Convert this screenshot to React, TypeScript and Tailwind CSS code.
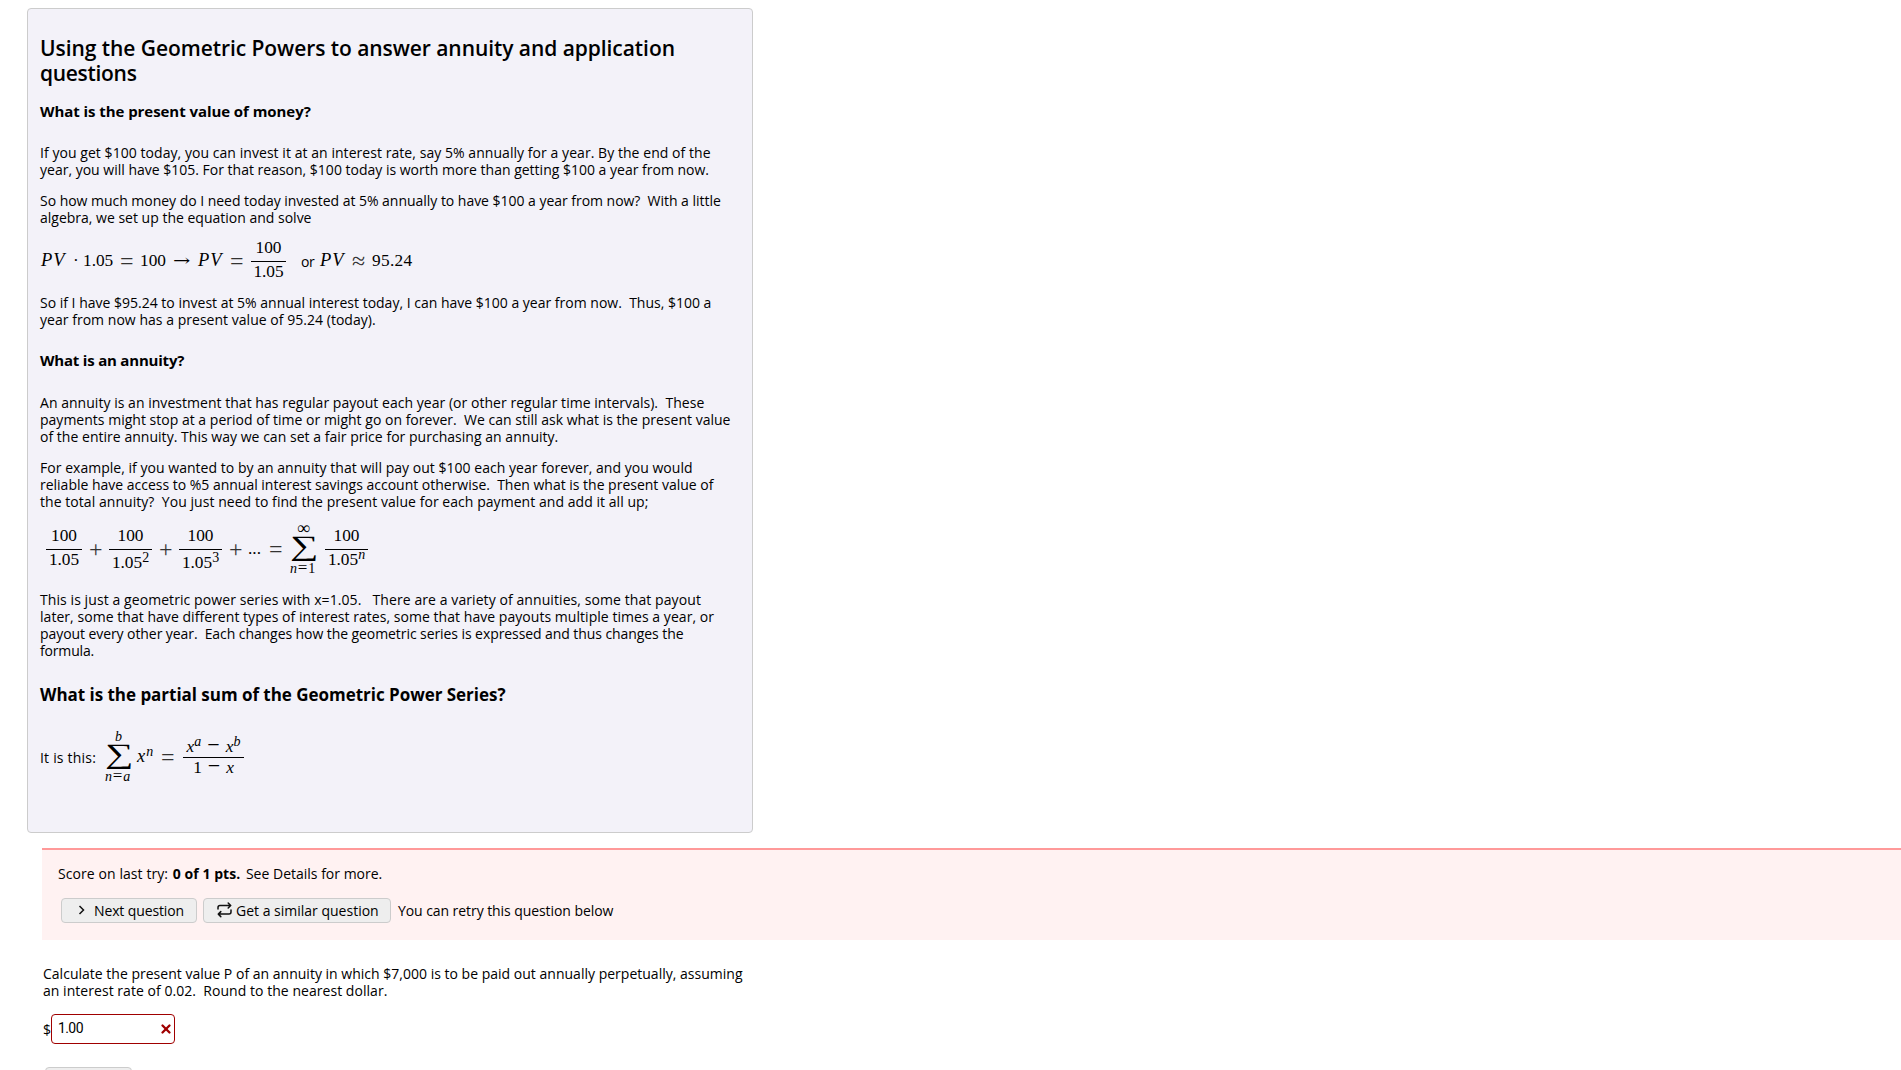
import React from 'react';
import { X } from 'lucide-react';

const Frac: React.FC<{ className?: string; top: React.ReactNode; bottom: React.ReactNode; drop?: string }> = ({
  className = '',
  top,
  bottom,
  drop = 'pt-[1px]',
}) => (
  <span className={`flex shrink-0 flex-col text-center ${className}`}>
    <span className="h-[22px] leading-[17px]">{top}</span>
    <span className="h-px bg-black" />
    <span className={`h-[22px] leading-[17px] ${drop}`}>{bottom}</span>
  </span>
);

const Sup: React.FC<{ children: React.ReactNode }> = ({ children }) => (
  <span className="relative -top-[6px] text-[14px] leading-none">{children}</span>
);

// one token of a formula, its width includes the space that follows
const Tok: React.FC<{ className: string; children: React.ReactNode }> = ({ className, children }) => (
  <span className={`shrink-0 pb-[2px] leading-[17px] ${className}`}>{children}</span>
);

const Op: React.FC<{ className: string; children: React.ReactNode }> = ({ className, children }) => (
  <span className={`shrink-0 text-[24px] leading-[17px] text-[#333] ${className}`}>{children}</span>
);

const Sum: React.FC<{ className: string; from: React.ReactNode; to: React.ReactNode }> = ({ className, from, to }) => (
  <span className={`flex shrink-0 flex-col text-[14px] ${className}`}>
    <span className="h-[13px] w-[27px] text-center leading-[9px]">{to}</span>
    <span className="h-[25px] w-6 origin-left scale-x-[1.42] text-[28px] leading-[17px]">∑</span>
    <span className="h-[13px] whitespace-nowrap leading-[12px] tracking-[0.8px]">{from}</span>
  </span>
);

const formula = "flex items-center whitespace-nowrap font-['Liberation_Serif',serif] text-[17.3px]";

export default function App() {
  return (
    <div className="h-[1070px] overflow-hidden bg-white font-['Open_Sans',sans-serif] text-sm leading-[17px] text-black">
      <div className="flex flex-col pt-2">
        {/* Reading */}
        <section className="ml-[27px] h-[825px] w-[726px] whitespace-nowrap rounded border border-[#ccc] bg-[#f3f2f9] pl-3">
          <h2 className="mt-[27px] text-[21px] font-semibold leading-[25px]">
            <span className="block tracking-[-0.06px]">Using the Geometric Powers to answer annuity and application</span>
            <span className="block tracking-[-0.3px]">questions</span>
          </h2>
          <h4 className="mt-[16px] text-[15px] font-bold leading-[18px] tracking-[-0.06px]">What is the present value of money?</h4>

          <p className="mt-6">
            <span className="block tracking-[0.053px]">If you get $100 today, you can invest it at an interest rate, say 5% annually for a year. By the end of the</span>
            <span className="block">year, you will have $105. For that reason, $100 today is worth more than getting $100 a year from now.</span>
          </p>
          <p className="mt-[14px]">
            <span className="block tracking-[-0.03px]">So how much money do I need today invested at 5% annually to have $100 a year from now?&nbsp; With a little</span>
            <span className="block">algebra, we set up the equation and solve</span>
          </p>

          <div className={`${formula} h-[68px] pt-[2px]`}>
            <Tok className="w-[33px] pl-[1px] text-[18.5px] italic tracking-[1px]">PV</Tok>
            <Tok className="w-[10px]">·</Tok>
            <Tok className="w-[37px]">1.05</Tok>
            <Op className="w-[20px]">=</Op>
            <Tok className="w-[33px]">100</Tok>
            <span className="w-[24px] pb-[2px] text-[17.3px] leading-[17px]">
              <span className="inline-block origin-left scale-x-[1.3] font-['DejaVu_Serif',serif] text-[16px]">→</span>
            </span>
            <Tok className="w-[33px] pl-[1px] text-[18.5px] italic tracking-[1px]">PV</Tok>
            <Op className="w-[21px]">=</Op>
            <Frac className="w-[35px]" top="100" bottom="1.05" />
            <span className="w-[34px] pl-[15px] font-['Open_Sans',sans-serif] text-sm leading-[17px] tracking-[-0.4px]">or</span>
            <Tok className="w-[32px] text-[18.5px] italic tracking-[1px]">PV</Tok>
            <Op className="w-[20px]">≈</Op>
            <Tok className="w-[42px] tracking-[0.3px]">95.24</Tok>
          </div>

          <p>
            <span className="block">So if I have $95.24 to invest at 5% annual interest today, I can have $100 a year from now.&nbsp; Thus, $100 a</span>
            <span className="block tracking-[0.03px]">year from now has a present value of 95.24 (today).</span>
          </p>
          <h4 className="mt-[23px] text-[15px] font-bold leading-[18px] tracking-[-0.2px]">What is an annuity?</h4>

          <p className="mt-[25px]">
            <span className="block tracking-[0.032px]">An annuity is an investment that has regular payout each year (or other regular time intervals).&nbsp; These</span>
            <span className="block tracking-[0.013px]">payments might stop at a period of time or might go on forever.&nbsp; We can still ask what is the present value</span>
            <span className="block tracking-[0.027px]">of the entire annuity. This way we can set a fair price for purchasing an annuity.</span>
          </p>
          <p className="mt-[14px]">
            <span className="block tracking-[0.03px]">For example, if you wanted to by an annuity that will pay out $100 each year forever, and you would</span>
            <span className="block tracking-[-0.01px]">reliable have access to %5 annual interest savings account otherwise.&nbsp; Then what is the present value of</span>
            <span className="block tracking-[0.05px]">the total annuity?&nbsp; You just need to find the present value for each payment and add it all up;</span>
          </p>

          <div className={`${formula} h-[81px] pb-[2px] pl-[6px]`}>
            <Frac className="w-[36px]" top="100" bottom="1.05" />
            <Op className="w-[27px] pl-[7px]">+</Op>
            <Frac className="w-[43px]" top="100" bottom={<>1.05<Sup>2</Sup></>} drop="pt-[4px]" />
            <Op className="w-[27px] pl-[7px]">+</Op>
            <Frac className="w-[43px]" top="100" bottom={<>1.05<Sup>3</Sup></>} drop="pt-[4px]" />
            <Op className="w-[26px] pl-[7px]">+</Op>
            <Tok className="w-[21px]">...</Tok>
            <Op className="w-[21px]">=</Op>
            <Sum className="w-[35px]" to={<span className="text-[18px]">∞</span>} from={<><i>n</i><span className="text-[17px]">=</span>1</>} />
            <Frac className="w-[43px]" top="100" bottom={<>1.05<Sup><i>n</i></Sup></>} />
          </div>

          <p>
            <span className="block tracking-[0.08px]">This is just a geometric power series with x=1.05.&nbsp;&nbsp; There are a variety of annuities, some that payout</span>
            <span className="block tracking-[0.043px]">later, some that have different types of interest rates, some that have payouts multiple times a year, or</span>
            <span className="block tracking-[-0.076px]">payout every other year.&nbsp; Each changes how the geometric series is expressed and thus changes the</span>
            <span className="block tracking-[-0.17px]">formula.</span>
          </p>
          <h3 className="mt-[26px] text-[17px] font-bold leading-5 tracking-[-0.03px]">What is the partial sum of the Geometric Power Series?</h3>

          <div className={`${formula} h-[104px]`}>
            <span className="w-[65px] font-['Open_Sans',sans-serif] text-sm leading-[17px] tracking-[0.2px]">It is this:</span>
            <Sum className="w-[32px]" to={<i>b</i>} from={<><i>n</i><span className="text-[17px]">=</span><i>a</i></>} />
            <Tok className="w-[24px] text-[18.5px] italic"><span className="mr-[1px]">x</span><Sup>n</Sup></Tok>
            <Op className="w-[22px]">=</Op>
            <Frac
              className="w-[61px]"
              top={<span className="relative -top-[1px]"><i>x</i><Sup><i>a</i></Sup><span className="mx-[6px] text-[22px] leading-none">−</span><i>x</i><Sup><i>b</i></Sup></span>}
              bottom={<span className="relative -top-[4px]">1<span className="mx-[6px] text-[22px] leading-none">−</span><i>x</i></span>}
            />
          </div>
        </section>

        {/* Score banner */}
        <section className="ml-[42px] mt-[15px] h-[92px] border-t-2 border-[#ff9999] bg-[#fff2f2] pl-4 pt-[15px]">
          <p className="flex whitespace-pre">
            <span className="tracking-[0.08px]">Score on last try: </span>
            <b className="ml-px tracking-[0.05px]">0 of 1 pts.</b>
            <span className="ml-[2px]"> See Details for more.</span>
          </p>
          <div className="mt-4 flex items-center whitespace-nowrap pl-[3px]">
            <button className="flex h-[25px] w-[136px] items-center rounded border border-[#ccc] bg-[#eee] pl-[16px]">
              <svg className="h-3 w-2" viewBox="0 0 8 12" fill="none" stroke="#111" strokeWidth="1.5">
                <path d="M1.5 1 5.5 5 1.5 9" />
              </svg>
              <span className="ml-[8px] tracking-[-0.12px]">Next question</span>
            </button>
            <button className="ml-[6px] flex h-[25px] w-[188px] items-center rounded border border-[#ccc] bg-[#eee] pl-[13px]">
              <svg className="-mt-[2px] h-4 w-[15px]" viewBox="0 0 15 16" fill="none" stroke="#111" strokeWidth="1.5" strokeLinecap="round" strokeLinejoin="round">
                <path d="M1 7V5.5Q1 3.5 3 3.5H13.5M11.2 1 13.7 3.5 11.2 6" />
                <path d="M14 8V10Q14 12 12 12H1.5M3.8 9.6 1.3 12.1 3.8 14.6" />
              </svg>
              <span className="ml-[4px]">Get a similar question</span>
            </button>
            <span className="ml-[7px] tracking-[-0.07px]">You can retry this question below</span>
          </div>
        </section>

        {/* Question */}
        <section className="ml-[43px] mt-[25px] whitespace-nowrap">
          <p>
            <span className="block tracking-[0.01px]">Calculate the present value P of an annuity in which $7,000 is to be paid out annually perpetually, assuming</span>
            <span className="block tracking-[0.04px]">an interest rate of 0.02.&nbsp; Round to the nearest dollar.</span>
          </p>
          <div className="mt-[15px] flex items-center">
            <span className="w-2">$</span>
            <div className="flex h-[30px] w-[124px] items-center justify-between rounded border border-[#a00000] bg-white pl-[6px] pr-[1px]">
              <span className="pb-[1px] font-[Roboto,sans-serif] text-[14px] tracking-[-0.6px]">1.00</span>
              <X className="h-[14px] w-[14px] text-[#a00000]" strokeWidth={4} />
            </div>
          </div>
          <button className="ml-[2px] mt-[23px] block h-[25px] w-[87px] rounded border border-[#ccc] bg-[#eee]" aria-label="Submit" />
        </section>
      </div>
    </div>
  );
}
